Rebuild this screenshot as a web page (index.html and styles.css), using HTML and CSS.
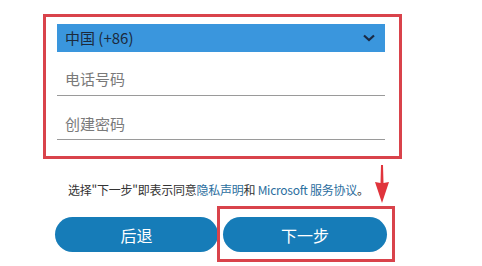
FILE: index.html
```html
<!DOCTYPE html>
<html lang="zh-CN">
<head>
<meta charset="utf-8">
<link rel="stylesheet" href="styles.css">
</head>
<body>
<div class="page">
  <div class="form-box">
    <div class="select">
      <span class="select-text">中国 (+86)</span>
      <svg class="chevron" width="12" height="8" viewBox="0 0 12 8"><path d="M1 1.5 L6 6 L11 1.5" fill="none" stroke="#1b2a44" stroke-width="2.2"/></svg>
    </div>
    <div class="field">电话号码</div>
    <div class="field">创建密码</div>
  </div>
  <p class="terms">选择"下一步"即表示同意<span class="link">隐私声明</span>和 <span class="link">Microsoft 服务协议</span>。</p>
  <div class="buttons">
    <button class="btn">后退</button>
    <button class="btn">下一步</button>
  </div>
</div>
<div class="highlight"></div>
<svg class="arrow" width="18" height="40" viewBox="0 0 18 40"><path d="M8 0 L10 0 L10.5 18 L16 17 L9 38 L2 17 L7.5 18 Z" fill="#e0343c"/></svg>
</body>
</html>
```
FILE: styles.css
```css
html, body {
  margin: 0;
  background: #fff;
}
body {
  position: relative;
  width: 482px;
  height: 266px;
  overflow: hidden;
  font-family: "Noto Sans CJK SC", "Noto Sans", sans-serif;
}
.page {
  padding: 14px 0 0 43px;
}
.form-box {
  box-sizing: border-box;
  width: 359px;
  height: 145px;
  border: 3px solid #d9434b;
  padding: 7px 14px 0 11px;
}
.select {
  height: 28px;
  background: #3a96dd;
  display: flex;
  align-items: center;
  justify-content: space-between;
  padding: 0 10px 0 8px;
}
.select-text {
  font-size: 15px;
  color: #1c2a3c;
  line-height: 20px;
}
.chevron {
  display: block;
}
.field {
  box-sizing: border-box;
  height: 44px;
  border-bottom: 1px solid #9a9a9a;
  display: flex;
  align-items: flex-end;
  padding: 0 0 6px 8px;
  font-size: 15px;
  line-height: 20px;
  color: #7a7a7a;
}
.field + .field {
  padding-bottom: 5px;
}
.terms {
  margin: 22px 0 0 25px;
  font-size: 12px;
  line-height: 18px;
  letter-spacing: -0.25px;
  color: #333;
  white-space: nowrap;
}
.link {
  color: #2b6e9e;
}
.buttons {
  display: flex;
  gap: 5px;
  margin: 18px 0 0 12px;
}
.btn {
  width: 163px;
  height: 35px;
  border: none;
  border-radius: 18px;
  background: #167cb8;
  color: #fff;
  font-family: "Noto Sans CJK SC", sans-serif;
  font-size: 16px;
  padding: 0;
}
.btn + .btn {
  width: 164px;
}
.highlight {
  position: absolute;
  left: 217px;
  top: 206px;
  width: 178px;
  height: 56px;
  box-sizing: border-box;
  border: 3px solid #d9434b;
}
.arrow {
  position: absolute;
  left: 373px;
  top: 165px;
}
```
